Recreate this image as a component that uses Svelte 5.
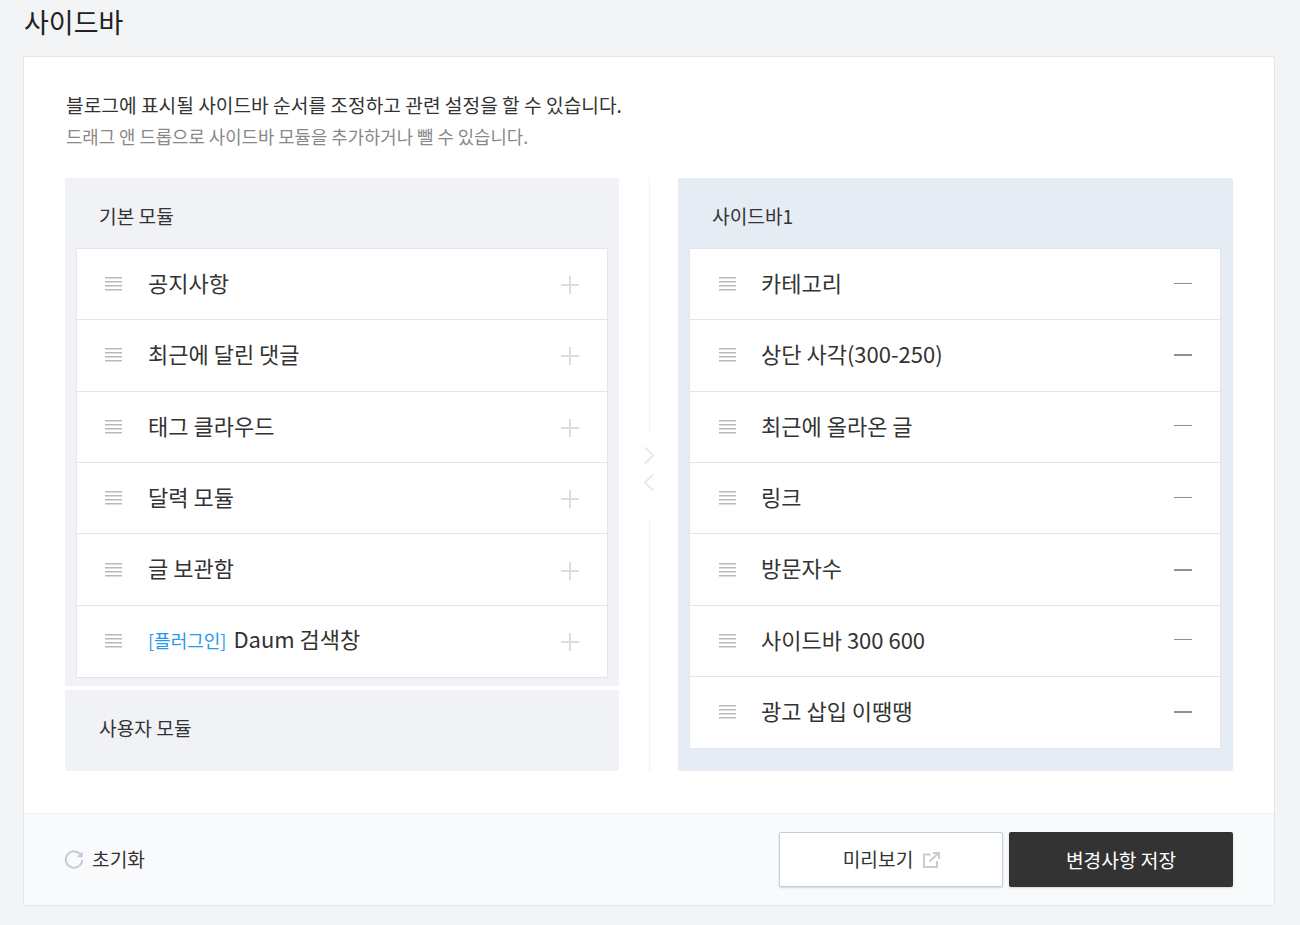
<script>
  const basic = ['공지사항', '최근에 달린 댓글', '태그 클라우드', '달력 모듈', '글 보관함'];
  const sidebar = ['카테고리', '상단 사각(300-250)', '최근에 올라온 글', '링크', '방문자수', '사이드바 300 600', '광고 삽입 이땡땡'];
</script>

{#snippet grip()}
  <svg class="grip" width="17" height="14" viewBox="0 0 17 14" aria-hidden="true">
    <path d="M0 .5h17M0 4.500h17M0 8.500h17M0 12.500h17" stroke="#b9b9b9" stroke-width="1" fill="none" />
    <path d="M0 1.500h17M0 5.500h17M0 9.500h17M0 13.500h17" stroke="#dcdcdc" stroke-width="1" fill="none" />
  </svg>
{/snippet}

{#snippet plus()}
  <svg class="plus" width="18" height="18" viewBox="0 0 18 18" aria-hidden="true">
    <path d="M0 9h18M9 0v18" stroke="#dcdcdc" stroke-width="2" fill="none" />
  </svg>
{/snippet}

<div class="page">
  <h2>사이드바</h2>
  <div class="card">
    <div class="body">
      <p class="desc">블로그에 표시될 사이드바 순서를 조정하고 관련 설정을 할 수 있습니다.</p>
      <p class="sub">드래그 앤 드롭으로 사이드바 모듈을 추가하거나 뺄 수 있습니다.</p>

      <div class="columns">
        <div class="left">
          <section class="panel basic">
            <h3>기본 모듈</h3>
            <ul>
              {#each basic as name}
                <li>{@render grip()}<span class="name">{name}</span>{@render plus()}</li>
              {/each}
              <li>{@render grip()}<span class="name"><em>[플러그인]</em>Daum 검색창</span>{@render plus()}</li>
            </ul>
          </section>
          <section class="panel user">
            <h3>사용자 모듈</h3>
          </section>
        </div>

        <div class="divider">
          <span class="rule"></span>
          <svg width="12" height="46" viewBox="0 0 12 46" aria-hidden="true">
            <path d="M1 1.500l8 8-8 8M9 28.500l-8 8 8 8" stroke="#e6e9f0" stroke-width="2" fill="none" />
          </svg>
          <span class="rule"></span>
        </div>

        <section class="panel right">
          <h3>사이드바1</h3>
          <ul>
            {#each sidebar as name}
              <li>{@render grip()}<span class="name">{name}</span><span class="minus"></span></li>
            {/each}
          </ul>
        </section>
      </div>
    </div>

    <div class="footer">
      <button class="reset">
        <svg width="20" height="20" viewBox="0 0 20 20" aria-hidden="true">
          <path d="M17.200 5.600A8.200 8.200 0 1 0 18.200 10" stroke="#c5cbd6" stroke-width="2" fill="none" />
          <path d="M18.600 1.600v5.600h-5.600z" fill="#c5cbd6" />
        </svg>
        초기화
      </button>
      <div class="actions">
        <button class="btn preview">
          미리보기
          <svg width="17" height="16" viewBox="0 0 17 16" aria-hidden="true">
            <path d="M7.500 2.500H1v12.500h13V9M6.500 9.500L15 1.500M10 1h6v6" stroke="#ccc" stroke-width="2" fill="none" />
          </svg>
        </button>
        <button class="btn save">변경사항 저장</button>
      </div>
    </div>
  </div>
</div>

<style>
  :global(body) {
    background: #f3f4f6;
    font-family: "Noto Sans CJK KR", "Noto Sans", sans-serif;
    color: #333;
  }
  .page {
    padding: 0 25px 18px 23px;
    height: 925px;
    box-sizing: border-box;
  }
  h2 {
    margin: 0;
    height: 56px;
    padding-left: 1px;
    font-size: 27px;
    font-weight: 400;
    line-height: 44px;
    color: #222;
  }
  .card {
    background: #fff;
    border: 1px solid #e4e6ec;
    border-radius: 2px;
  }
  .body {
    padding: 33px 41px 42px;
  }
  p {
    margin: 0;
    padding-left: 1px;
  }
  .desc {
    font-size: 19.2px;
    line-height: 30px;
    color: #333;
  }
  .sub {
    margin-top: 1px;
    font-size: 17.8px;
    line-height: 30px;
    color: #888;
  }
  .columns {
    display: grid;
    grid-template-columns: 554px 1fr 555px;
    margin-top: 27px;
    height: 593px;
  }
  .left {
    display: flex;
    flex-direction: column;
    gap: 4px;
  }
  .panel {
    border-radius: 2px;
    background: #f0f2f6;
    padding: 0 11px;
  }
  .panel.basic {
    height: 508px;
  }
  .panel.user {
    flex: 1;
  }
  .panel.right {
    background: #e5ecf3;
    padding-right: 12px;
  }
  h3 {
    margin: 0;
    height: 70px;
    padding-left: 23px;
    font-size: 19.2px;
    font-weight: 400;
    line-height: 76px;
    color: #333;
  }
  ul {
    margin: 0;
    padding: 0;
    list-style: none;
    background: #fff;
    border: 1px solid #e2e5ee;
    border-radius: 1px;
  }
  li {
    display: flex;
    align-items: center;
    height: 71.4px;
    box-sizing: border-box;
    padding: 0 28px;
    border-top: 1px solid #e2e5ee;
  }
  li:first-child {
    border-top: 0;
    height: 70.2px;
  }
  .basic li:last-child {
    height: 72px;
  }
  .grip {
    flex: none;
  }
  .right li {
    padding-left: 29px;
  }
  .name {
    flex: 1;
    margin-left: 26px;
    margin-bottom: 4.4px;
    font-size: 22px;
    line-height: 32px;
    color: #333;
  }
  .right .name {
    margin-left: 25px;
  }
  em {
    font-style: normal;
    font-size: 18px;
    color: #1e9af0;
    margin-right: 7px;
  }
  .plus {
    flex: none;
    transform: translateY(1px);
  }
  .minus {
    flex: none;
    width: 18px;
    height: 1px;
    background: #8b919e;
    transform: translateY(-1px);
  }
  .right li:nth-child(2) .minus,
  .right li:nth-child(5) .minus,
  .right li:nth-child(7) .minus {
    height: 2px;
    transform: none;
  }
  .divider {
    display: flex;
    flex-direction: column;
    align-items: center;
    padding-left: 2px;
  }
  .divider svg {
    margin: 14px 0 26px;
  }
  .rule {
    flex: 1;
    width: 1px;
    background: #f0f2f5;
  }
  .footer {
    display: flex;
    justify-content: space-between;
    align-items: center;
    height: 91px;
    padding: 0 41px 0 40px;
    background: #f9fafc;
    border-top: 1px solid #eff0f3;
  }
  button {
    font: inherit;
    cursor: pointer;
    padding: 0;
  }
  .reset {
    display: flex;
    align-items: center;
    gap: 8px;
    border: 0;
    background: none;
    padding-bottom: 2px;
    font-size: 19.2px;
    color: #333;
  }
  .reset svg {
    margin-top: 2px;
  }
  .actions {
    display: flex;
    gap: 6px;
  }
  .btn {
    display: flex;
    align-items: center;
    justify-content: center;
    width: 224px;
    height: 55px;
    box-sizing: border-box;
    border-radius: 2px;
    font-size: 19.2px;
    box-shadow: 0 1px 2px rgba(0, 0, 0, 0.15);
  }
  .preview {
    gap: 10px;
    background: #fff;
    border: 1px solid #c2cede;
    padding: 0 0 2px 1px;
    color: #333;
  }
  .preview svg {
    margin-top: 2px;
  }
  .save {
    background: #333;
    border: 0;
    color: #fff;
  }
</style>
